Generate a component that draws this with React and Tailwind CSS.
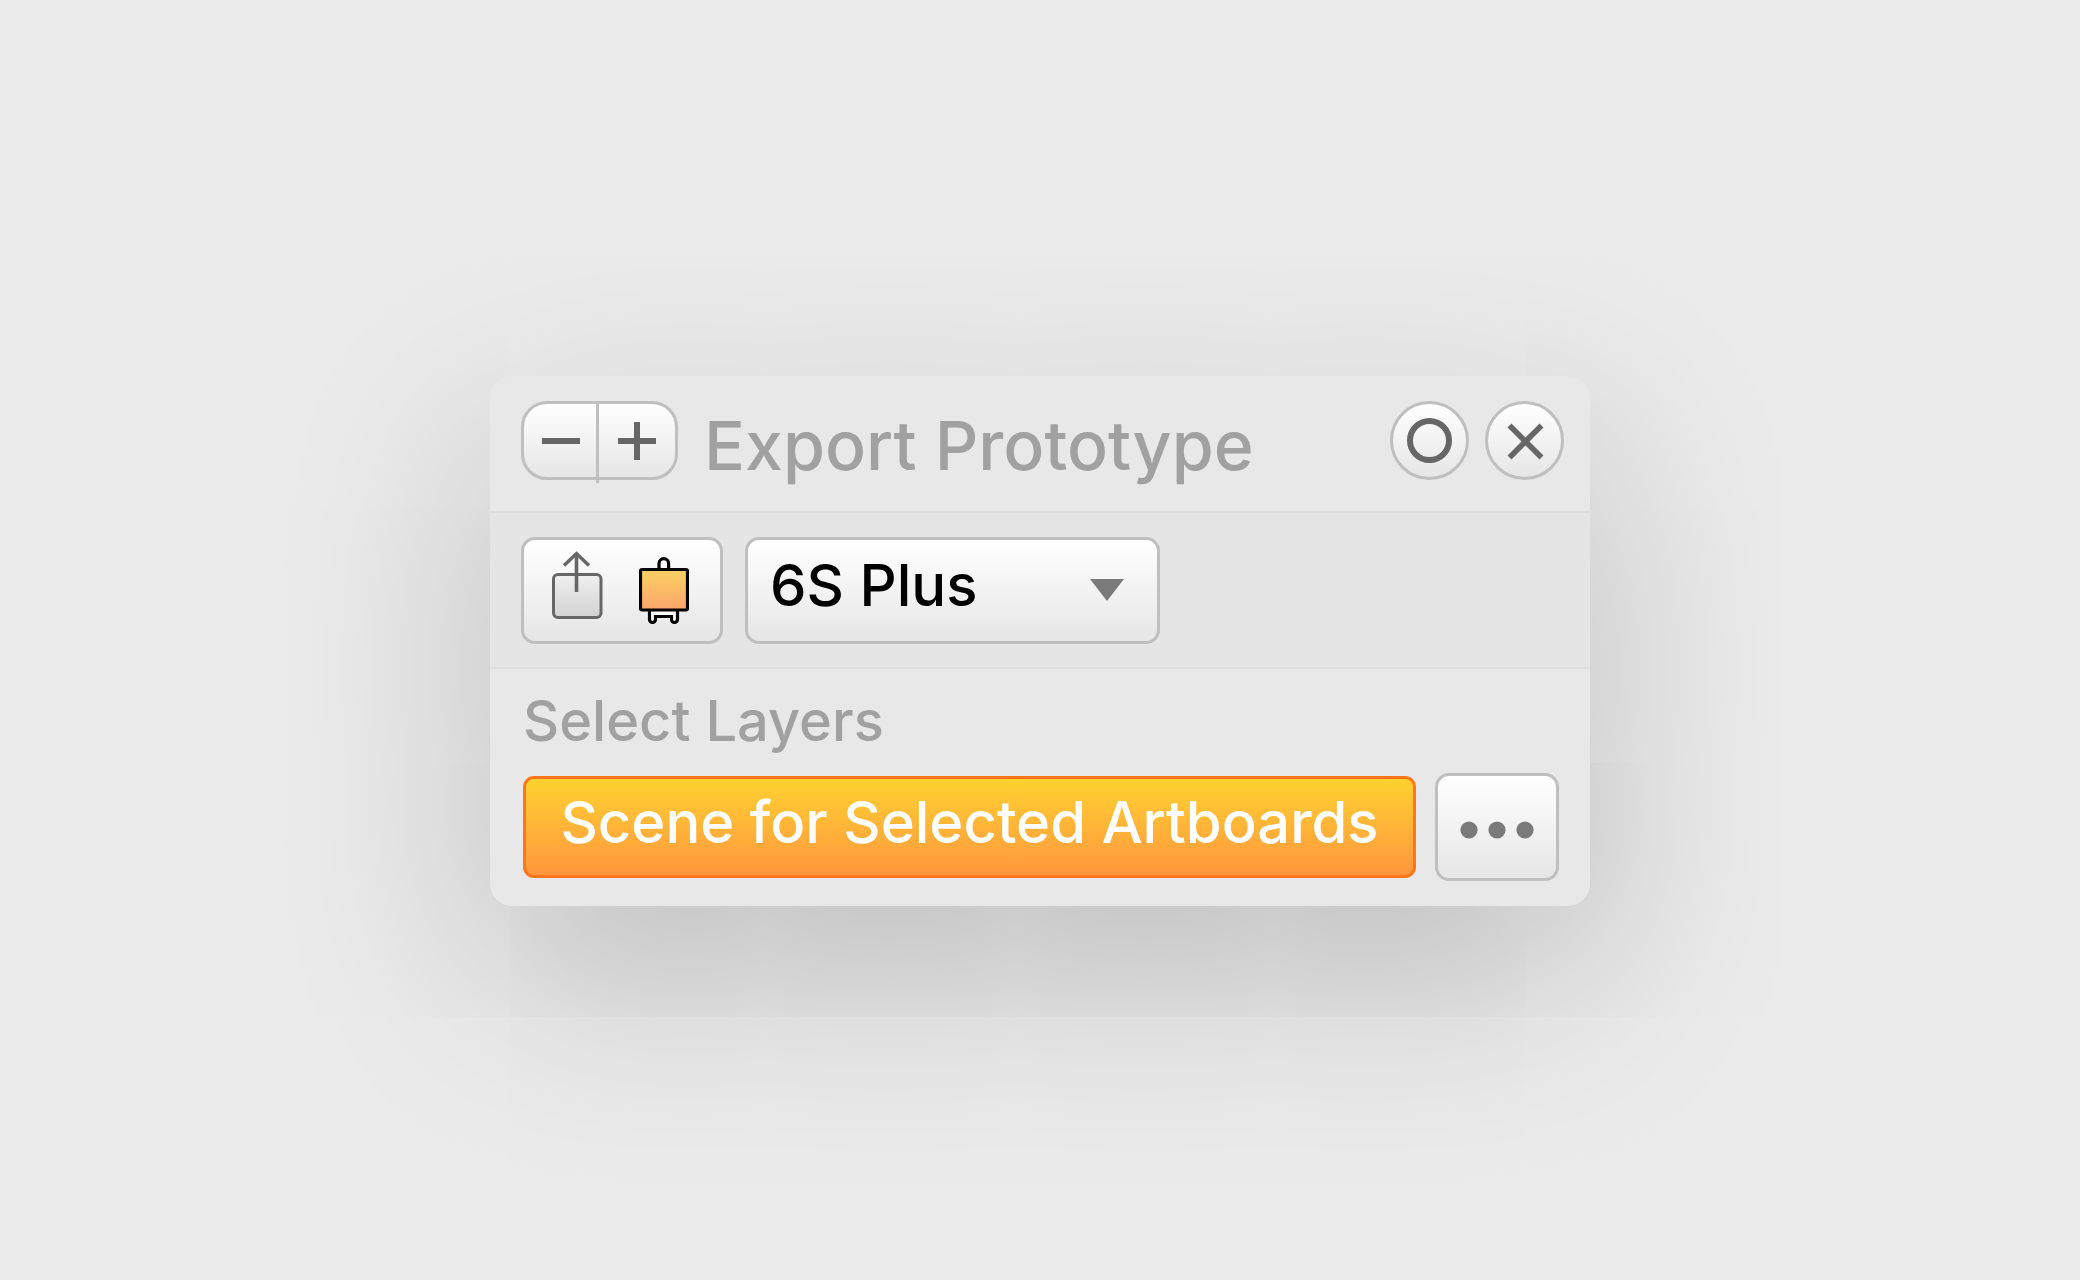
import React, { useState } from "react";

const raised =
  "border-[3px] border-[#bfbfbf] bg-linear-to-b from-white to-[#e6e6e6]";

function MinusIcon() {
  return (
    <svg width="40" height="40" viewBox="0 0 40 40" stroke="#666" strokeWidth="6">
      <path d="M2 20h38" />
    </svg>
  );
}

function PlusIcon() {
  return (
    <svg width="40" height="40" viewBox="0 0 40 40" stroke="#666" strokeWidth="6">
      <path d="M1 20h38M20 1v38" />
    </svg>
  );
}

function CloseIcon() {
  return (
    <svg width="40" height="40" viewBox="0 0 40 40" stroke="#666" strokeWidth="5.6">
      <path d="M4.5 4.5l32 32M36.5 4.5l-32 32" />
    </svg>
  );
}

function RingIcon() {
  return (
    <svg width="45" height="45" viewBox="0 0 45 45" fill="none" stroke="#666" strokeWidth="6">
      <circle cx="22.5" cy="22.5" r="19.5" />
    </svg>
  );
}

function ShareIcon() {
  return (
    <svg width="51" height="76" viewBox="0 0 51 76" fill="none" stroke="#666" strokeWidth="3">
      <defs>
        <linearGradient id="shareFill" x1="0" y1="0" x2="0" y2="1">
          <stop offset="0" stopColor="#f0f0f0" />
          <stop offset="1" stopColor="#d2d2d2" />
        </linearGradient>
      </defs>
      <rect x="1.5" y="24.5" width="47.5" height="43" rx="4.5" fill="url(#shareFill)" />
      <path d="M24.5 3v39" strokeWidth="3.6" />
      <path d="M12 15.5L24.5 3.5l12.500 12" strokeWidth="3.4" />
    </svg>
  );
}

function ArtboardIcon() {
  return (
    <svg width="50" height="76" viewBox="0 0 50 76" fill="none" stroke="#000" strokeWidth="3.2">
      <defs>
        <linearGradient id="boardFill" x1="0" y1="0" x2="0" y2="1">
          <stop offset="0" stopColor="#fad163" />
          <stop offset="1" stopColor="#fca56c" />
        </linearGradient>
      </defs>
      <path d="M20 20v-6.500a4.800 4.800 0 0 1 9.600 0V20" fill="#fff" />
      <path
        d="M10.500 60v9.500a3 3 0 0 0 6 0V66.500h16v3a3 3 0 0 0 6 0V60"
        fill="#fff"
      />
      <rect x="1.500" y="19.500" width="47" height="40.500" rx="1.500" fill="url(#boardFill)" />
    </svg>
  );
}

function Header() {
  return (
    <header className="flex items-start border-b-2 border-[#dddddd] pt-[25px] pr-[26px] pb-[26px] pl-[31px]">
      <div className={`flex h-[79px] w-[157px] items-start rounded-[26px] ${raised}`}>
        <button aria-label="Remove" className="flex h-full w-[72px] items-center justify-center">
          <MinusIcon />
        </button>
        <span className="h-[79px] w-[3px] bg-[#bfbfbf]" />
        <button aria-label="Add" className="flex h-full flex-1 items-center justify-center">
          <PlusIcon />
        </button>
      </div>
      <h1 className="ml-[26px] pt-1 text-[68px] leading-[80px] font-medium whitespace-nowrap text-[#a1a1a1]">
        Export Prototype
      </h1>
      <div className="ml-auto flex gap-4">
        <button
          aria-label="Record"
          className={`flex size-[79px] items-center justify-center rounded-full ${raised}`}
        >
          <RingIcon />
        </button>
        <button
          aria-label="Close"
          className={`flex size-[79px] items-center justify-center rounded-full ${raised}`}
        >
          <CloseIcon />
        </button>
      </div>
    </header>
  );
}

function Toolbar() {
  const [device, setDevice] = useState("6S Plus");

  return (
    <div className="flex gap-[22px] border-b-2 border-[#dddddd] bg-[#e5e5e5] px-[31px] pt-6 pb-[23px]">
      <div className={`flex h-[107px] w-[202px] items-start gap-9 rounded-[14px] pt-2.5 pl-7 ${raised}`}>
        <button aria-label="Share">
          <ShareIcon />
        </button>
        <button aria-label="Artboard">
          <ArtboardIcon />
        </button>
      </div>
      <div className="relative w-[415px]">
        <select
          aria-label="Device"
          value={device}
          onChange={(e) => setDevice(e.target.value)}
          className={`h-[107px] w-full appearance-none rounded-[14px] pb-[11px] pl-[22px] text-[58px] font-medium text-black ${raised}`}
        >
          <option value="6S Plus">6S Plus</option>
          <option value="6S">6S</option>
          <option value="SE">SE</option>
        </select>
        <svg
          width="34"
          height="22"
          viewBox="0 0 34 22"
          className="pointer-events-none absolute top-[42px] right-9"
        >
          <path d="M0 0h34L17 22z" fill="#7a7a7a" />
        </svg>
      </div>
    </div>
  );
}

function Layers() {
  return (
    <section className="pt-[22px] pr-[31px] pb-[25px] pl-[33px]">
      <h2 className="text-[56px] leading-[60px] font-medium text-[#a1a1a1]">Select Layers</h2>
      <div className="mt-[22px] flex items-center gap-[19px]">
        <button className="h-[102px] flex-1 rounded-[11px] border-[3px] border-[#ff7519] bg-linear-to-b from-[#ffd12f] to-[#ff963d] pb-[11px] text-[58px] font-medium whitespace-nowrap text-white">
          Scene for Selected Artboards
        </button>
        <button
          aria-label="More"
          className={`flex h-[108px] w-[124px] items-center justify-center rounded-[14px] pt-1.5 ${raised}`}
        >
          <svg width="74" height="18" viewBox="0 0 74 18" fill="#7a7a7a">
            <circle cx="9" cy="9" r="8.6" />
            <circle cx="37" cy="9" r="8.6" />
            <circle cx="65" cy="9" r="8.6" />
          </svg>
        </button>
      </div>
    </section>
  );
}

export default function App() {
  return (
    <main className="flex min-h-screen items-center justify-center bg-[#ebebeb] pt-0.5 font-['Inter',sans-serif]">
      <div className="w-full max-w-[1100px] rounded-[22px] bg-[#e8e8e8] shadow-[0_66px_208px_rgba(0,0,0,0.22)]">
        <Header />
        <Toolbar />
        <Layers />
      </div>
    </main>
  );
}
